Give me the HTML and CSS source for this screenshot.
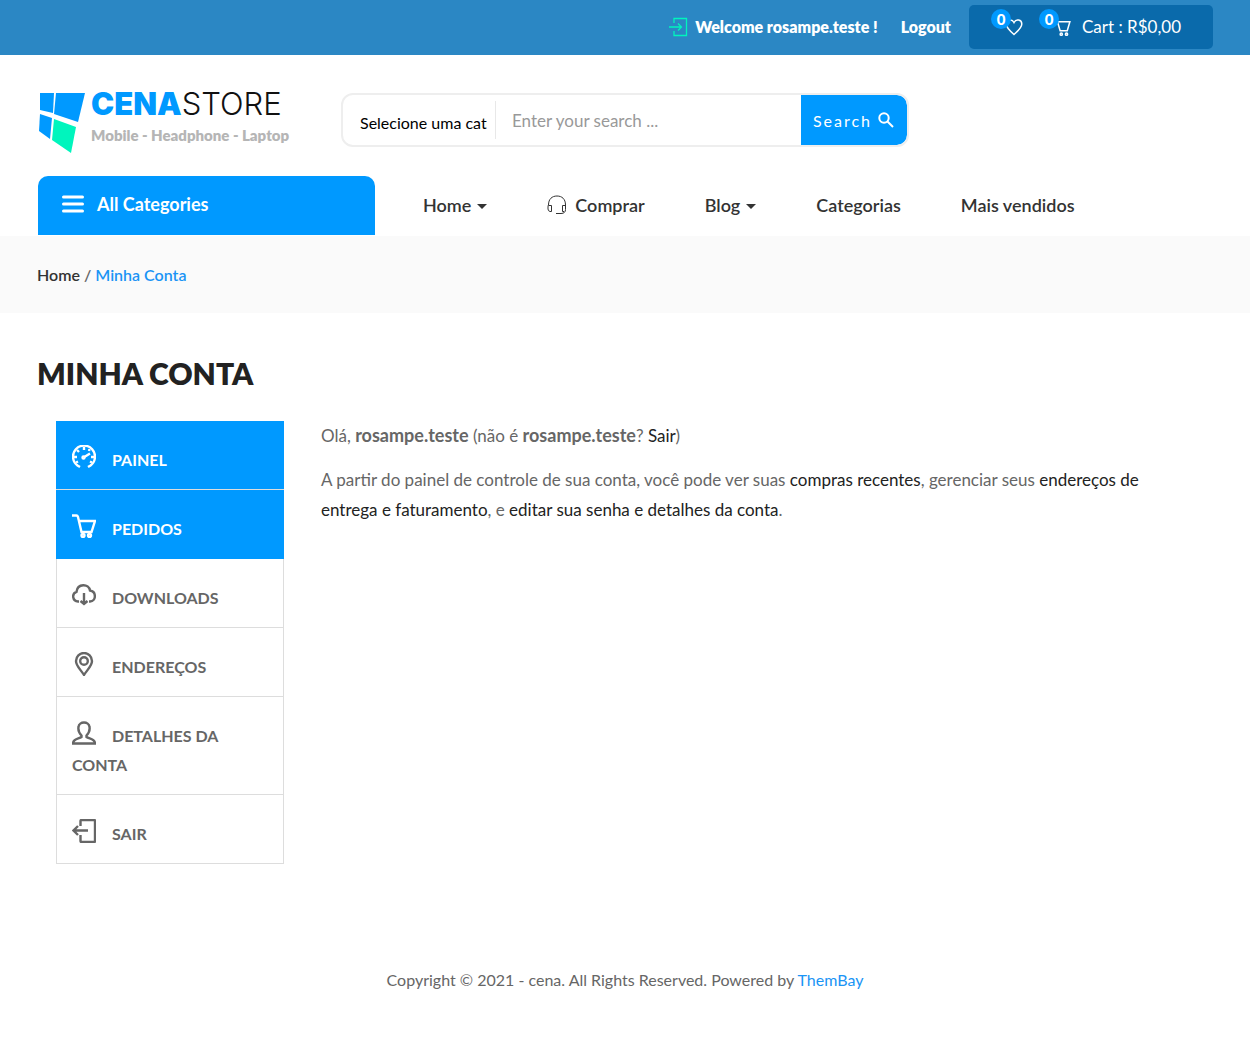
FILE: index.html
```html
<!DOCTYPE html>
<html lang="pt-BR">
<head>
<meta charset="utf-8">
<meta name="viewport" content="width=device-width, initial-scale=1">
<title>Minha Conta - Cena Store</title>
<link rel="stylesheet" href="styles.css">
</head>
<body>
<div class="topbar">
  <div class="topbar-account">
    <svg class="icon-login" viewBox="0 0 20 20" aria-hidden="true"><path d="M6 6V1.500H18.500V18.500H6V14M1 10H13M10 6.500L13.500 10L10 13.500"/></svg>
    <span>Welcome rosampe.teste !</span>
    <a class="logout" href="#">Logout</a>
  </div>
  <div class="topbar-cart">
    <a class="counter" href="#" aria-label="Wishlist">
      <svg class="icon-heart" viewBox="0 0 18 18" aria-hidden="true"><path d="M9 16.500C5 13 1.200 9.500 1.200 6C1.200 1.500 7 .5 9 4.500C11 .5 16.800 1.500 16.800 6C16.800 9.500 13 13 9 16.500Z"/></svg>
      <span class="badge">0</span>
    </a>
    <a class="counter cart" href="#">
      <svg class="icon-basket" viewBox="0 0 24 24" aria-hidden="true"><path d="M1 1.500H5L9.500 17H19L22.500 5H6.500"/><circle cx="11" cy="21.500" r="1.500"/><circle cx="18" cy="21.500" r="1.500"/></svg>
      <span class="badge">0</span>
      <span>Cart : R$0,00</span>
    </a>
  </div>
</div>

<header class="header">
  <div class="header-main">
    <a class="logo" href="#">
      <svg class="logo-mark" viewBox="0 0 46 60" aria-hidden="true"><g fill="#09f"><path d="M1 0H15L14 20L1 17Z"/><path d="M17 0H46L39 29L15 21Z"/><path d="M1 21L13 25L11 46L0 38Z"/></g><path fill="#00f5bd" d="M15 26L37 34L32 60L13 47Z"/></svg>
      <span class="logo-text">
        <span class="logo-name"><b>CENA</b>STORE</span>
        <span class="logo-tag">Mobile - Headphone - Laptop</span>
      </span>
    </a>
    <form class="search">
      <select class="search-category" aria-label="Categoria"><option>Selecione uma categoria</option></select>
      <input class="search-input" type="text" placeholder="Enter your search ..." aria-label="Search">
      <button class="search-button" type="button">Search
        <svg class="icon-search" viewBox="0 0 16 16" aria-hidden="true"><circle cx="6" cy="6" r="4.700"/><path d="M9.500 9.500L15 15"/></svg>
      </button>
    </form>
  </div>
  <div class="header-nav">
    <button class="categories" type="button">
      <svg class="icon-menu" viewBox="0 0 22 18" aria-hidden="true"><path d="M1.500 2H20.500M1.500 9H20.500M1.500 16H20.500"/></svg>
      All Categories
    </button>
    <nav class="menu">
      <a class="has-caret" href="#">Home</a>
      <a href="#"><svg class="icon-headset" viewBox="0 0 20 20" aria-hidden="true"><path d="M1.500 10C1.500 4 5 1 10 1S18.500 4 18.500 10V14.500C18.500 17 17 18.500 14 18.500H9M1.500 10.500H4.500V16.500H3Q1 16 1 14V12Q1 10.500 1.500 10M18.500 10.500H15.500V16.500H17"/></svg>Comprar</a>
      <a class="has-caret" href="#">Blog</a>
      <a href="#">Categorias</a>
      <a href="#">Mais vendidos</a>
    </nav>
  </div>
</header>

<nav class="breadcrumb"><a href="#">Home</a> / <span>Minha Conta</span></nav>

<main class="page">
  <h1>Minha Conta</h1>
  <div class="account">
    <nav class="account-menu">
      <a class="active" href="#"><svg viewBox="0 0 24 24" aria-hidden="true"><path d="M8 22L5.500 20.500A11 11 0 1 1 18.500 20.500L16 22"/><path d="M12 2V5M5 5L7 7M2 12H5M4 17.500L6 16.500M22 12H19M20 17.500L18 16.500M17.500 4L17 6M11.500 12.500L18 8.500"/><circle cx="11.500" cy="12.500" r="1"/></svg>Painel</a>
      <a class="active" href="#"><svg viewBox="0 0 24 24" aria-hidden="true"><path d="M0 1.500H4.500Q5.500 1.500 6 3L9.500 18H19.500L23 7H7"/><circle cx="11" cy="21.500" r="1.500"/><circle cx="17.500" cy="21.500" r="1.500"/></svg>Pedidos</a>
      <a href="#"><svg viewBox="0 0 24 24" aria-hidden="true"><path d="M7 18.500H6A5 5 0 0 1 4.500 8.800C5.500 0 17 .5 18 7.500C24.500 8.500 24.500 18 18 18.500H17M12 10V21M8.500 18L12 21L15.500 18"/></svg>Downloads</a>
      <a href="#"><svg viewBox="0 0 24 24" aria-hidden="true"><path d="M12 23C9 18 4 14 4 9A8 8 0 0 1 20 9C20 14 15 18 12 23Z"/><circle cx="12" cy="9" r="3.800"/></svg>Endereços</a>
      <a href="#"><svg viewBox="0 0 24 24" aria-hidden="true"><path d="M9.500 14.500C7 12 6 9 6.500 6C7 0 17 0 17.500 6C18 9 17 12 14.500 14.500V16C17 18 23 17.500 23 22.500H1C1 17.500 7 18 9.500 16Z"/></svg>Detalhes da conta</a>
      <a href="#"><svg viewBox="0 0 24 24" aria-hidden="true"><path d="M8.500 7V2Q8.500 1 9.500 1H22Q23 1 23 2V22Q23 23 22 23H9.500Q8.500 23 8.500 22V16M16 11.500H1.500M6 7L1.500 11.500L6 16"/></svg>Sair</a>
    </nav>
    <section class="account-content">
      <p>Olá, <strong>rosampe.teste</strong> (não é <strong>rosampe.teste</strong>? <a href="#">Sair</a>)</p>
      <p>A partir do painel de controle de sua conta, você pode ver suas <a href="#">compras recentes</a>, gerenciar seus <a href="#">endereços de entrega e faturamento</a>, e <a href="#">editar sua senha e detalhes da conta</a>.</p>
    </section>
  </div>
</main>

<footer class="footer">Copyright © 2021 - cena. All Rights Reserved. Powered by <a href="#">ThemBay</a></footer>
</body>
</html>
```
FILE: styles.css
```css
* { box-sizing: border-box; }
body {
  margin: 0;
  background: #fff;
  color: #666;
  font: 400 17px/30px Lato, "Liberation Sans", sans-serif;
}
a { color: inherit; text-decoration: none; }
button, input, select { font-family: inherit; border: 0; margin: 0; }
svg { flex: none; fill: none; stroke: currentColor; }

.topbar {
  display: flex;
  justify-content: flex-end;
  align-items: center;
  gap: 18px;
  padding: 5px 37px 6px;
  background: #2b87c4;
  color: #fff;
}
.topbar-account {
  display: flex;
  align-items: center;
  font-size: 16px;
  font-weight: 800;
}
.icon-login { width: 20px; height: 20px; margin-right: 7px; color: #00f5bd; stroke-width: 1.3; }
.logout { margin-left: 23px; }
.topbar-cart {
  display: flex;
  align-items: center;
  gap: 30px;
  height: 44px;
  padding: 0 32px 0 36px;
  border-radius: 5px;
  background: #0a6aab;
}
.counter { position: relative; display: flex; align-items: center; }
.icon-heart { width: 18px; height: 18px; stroke-width: 1.5; }
.icon-basket { width: 18px; height: 18px; margin-right: 11px; stroke-width: 2; }
.badge {
  position: absolute;
  top: -9px;
  left: -14px;
  width: 20px;
  height: 20px;
  border-radius: 50%;
  background: #09f;
  font-size: 15px;
  font-weight: 900;
  line-height: 20px;
  text-align: center;
}
.cart .badge { top: -3px; }

.header { padding: 38px 37px 0 38px; }
.header-main { display: flex; align-items: flex-start; gap: 50px; }
.logo { display: flex; gap: 6px; width: 253px; padding-left: 1px; }
.logo-mark { width: 46px; height: 60px; stroke: none; }
.logo-text { display: flex; flex-direction: column; white-space: nowrap; }
.logo-name { color: #111; font: 300 31px/22px Inter, sans-serif; }
.logo-name b { color: #09f; font-weight: 900; }
.logo-tag { color: #b5b5b5; font-size: 15px; font-weight: 800; line-height: 40px; }

.search {
  display: flex;
  align-items: center;
  width: 568px;
  height: 54px;
  border: 2px solid #eee;
  border-radius: 12px;
  overflow: hidden;
}
.search-category {
  appearance: none;
  width: 153px;
  height: 38px;
  padding: 4px 8px 0 17px;
  border-right: 1px solid #e8e8e8;
  background: none;
  color: #000;
  font-size: 16px;
  overflow: hidden;
  text-overflow: clip;
}
.search-input { flex: 1; min-width: 0; padding: 0 16px; font-size: 17px; }
.search-input::placeholder { color: #999; }
.search-button {
  display: flex;
  align-items: center;
  align-self: stretch;
  gap: 6px;
  padding: 0 13px 0 12px;
  background: #09f;
  border-radius: 0 10px 10px 0;
  color: #fff;
  font-size: 16px;
  letter-spacing: 2px;
}
.icon-search { width: 16px; height: 16px; stroke-width: 2; }

.header-nav { display: flex; align-items: stretch; margin-top: 21px; padding-bottom: 1px; }
.categories {
  display: flex;
  align-items: center;
  gap: 13px;
  width: 337px;
  height: 59px;
  padding: 0 24px 3px;
  border-radius: 10px 10px 0 0;
  background: #09f;
  color: #fff;
  font-size: 18px;
  font-weight: 700;
}
.icon-menu { width: 22px; height: 18px; stroke-width: 3; stroke-linecap: round; }
.menu {
  display: flex;
  align-items: center;
  gap: 60px;
  margin-left: 48px;
  padding-bottom: 2px;
  color: #333;
  font-size: 18px;
  font-weight: 600;
}
.menu a { display: flex; align-items: center; }
.icon-headset { width: 20px; height: 20px; margin-right: 8px; stroke-width: 1; }
.has-caret::after {
  content: "";
  margin: 4px 0 0 6px;
  border: 5px solid transparent;
  border-top-color: currentColor;
  border-bottom: 0;
}

.breadcrumb {
  padding: 24px 37px 23px;
  background: #fafafa;
  font-size: 16px;
  font-weight: 600;
}
.breadcrumb a { color: #333; }
.breadcrumb span { color: #1a94f5; }

.page { padding: 40px 37px 0; }
h1 {
  margin: 0 0 28px;
  color: #222;
  font-size: 30px;
  font-weight: 800;
  line-height: 40px;
  text-transform: uppercase;
}
.account { display: flex; align-items: flex-start; gap: 37px; padding-left: 19px; }
.account-menu { flex: none; width: 228px; border: 1px solid #ddd; border-top: 0; }
.account-menu a {
  display: block;
  padding: 24px 15px 15px;
  border-bottom: 1px solid #ddd;
  font-size: 16px;
  font-weight: 700;
  line-height: 29px;
  text-transform: uppercase;
}
.account-menu a:last-child { border-bottom: 0; }
.account-menu .active { margin: 0 -1px; padding: 24px 16px 15px; background: #09f; color: #fff; }
.account-menu .active + .active { border-bottom-color: #09f; }
.account-menu svg { width: 24px; height: 24px; margin: -4px 16px 0 0; vertical-align: -3px; stroke-width: 2.4; }
.account-content { flex: 1; padding-right: 37px; }
.account-content p { margin: 0 0 14px; }
.account-content strong { font-size: 18px; line-height: 20px; }
.account-content a { color: #222; }

.footer { padding: 101px 37px 42px; font-size: 16px; text-align: center; }
.footer a { color: #1a94f5; }
```
